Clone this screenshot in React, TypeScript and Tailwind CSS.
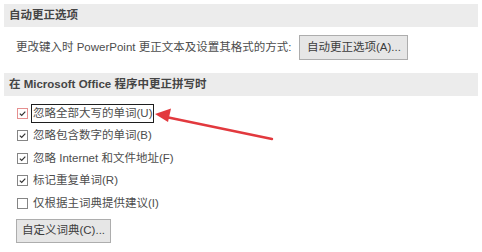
const font = { fontFamily: '"Liberation Sans", "Noto Sans CJK SC", sans-serif' };

const Check = ({ checked, focus }: { checked: boolean; focus?: boolean }) => (
    <span
        className={
            "flex h-[11px] w-[11px] items-center justify-center border bg-white " +
            (focus ? "border-[#e58f8f]" : "border-[#858585]")
        }
    >
        {checked && (
            <svg width="9" height="9" viewBox="0 0 9 9">
                <path d="M1.8 4.6 L3.7 6.4 L7.3 2.6" fill="none" stroke="#333" strokeWidth="1.2" />
            </svg>
        )}
    </span>
);

const Row = ({ label, checked, focus, boxed }: { label: string; checked: boolean; focus?: boolean; boxed?: boolean }) => (
    <div className="flex h-[22.5px] items-center gap-[5px] pl-[17px]">
        <Check checked={checked} focus={focus} />
        <span className="relative text-[11.5px] leading-none text-[#4d4d4d]">
            {label}
            {boxed && <span className="absolute -bottom-[4px] -left-[2px] -right-[2px] -top-[4px] border-[1.5px] border-[#1e1e1e]" />}
        </span>
    </div>
);

const Band = ({ title }: { title: string }) => (
    <div className="mx-[4px] flex h-[23px] items-center bg-[#ececec] pl-[5px]">
        <span className="text-[11.5px] font-bold leading-none text-[#454545]">{title}</span>
    </div>
);

export default function App() {
    const rows = [
        { label: "忽略全部大写的单词(U)", checked: true, focus: true, boxed: true },
        { label: "忽略包含数字的单词(B)", checked: true },
        { label: "忽略 Internet 和文件地址(F)", checked: true },
        { label: "标记重复单词(R)", checked: true },
        { label: "仅根据主词典提供建议(I)", checked: false },
    ];
    return (
        <div className="relative h-[252px] w-[482px] overflow-hidden bg-white pt-[4px]" style={font}>
            <Band title="自动更正选项" />
            <div className="mt-[8px] flex h-[25px] items-center pl-[16px]">
                <span className="text-[11.5px] leading-none text-[#4d4d4d]">
                    更改键入时 PowerPoint 更正文本及设置其格式的方式:
                </span>
                <button className="ml-[8px] h-[25px] w-[109px] border border-[#adadad] bg-[#e6e6e6] text-[11.5px] leading-none text-[#3c3c3c]">
                    自动更正选项(A)...
                </button>
            </div>
            <div className="mt-[13px]">
                <Band title="在 Microsoft Office 程序中更正拼写时" />
            </div>
            <div className="mt-[6px]">
                {rows.map(r => (
                    <Row key={r.label} {...r} />
                ))}
            </div>
            <div className="mt-[2.5px] pl-[16px]">
                <button className="h-[24px] w-[95px] border border-[#adadad] bg-[#e6e6e6] text-[11.5px] leading-none text-[#3c3c3c]">
                    自定义词典(C)...
                </button>
            </div>
            <svg className="pointer-events-none absolute left-0 top-0" width="482" height="252">
                <line x1="272" y1="139" x2="166" y2="117" stroke="#e2393e" strokeWidth="2.4" strokeLinecap="round" />
                <polygon points="155,114 171,108.5 168,122" fill="#e2393e" />
            </svg>
        </div>
    );
}
